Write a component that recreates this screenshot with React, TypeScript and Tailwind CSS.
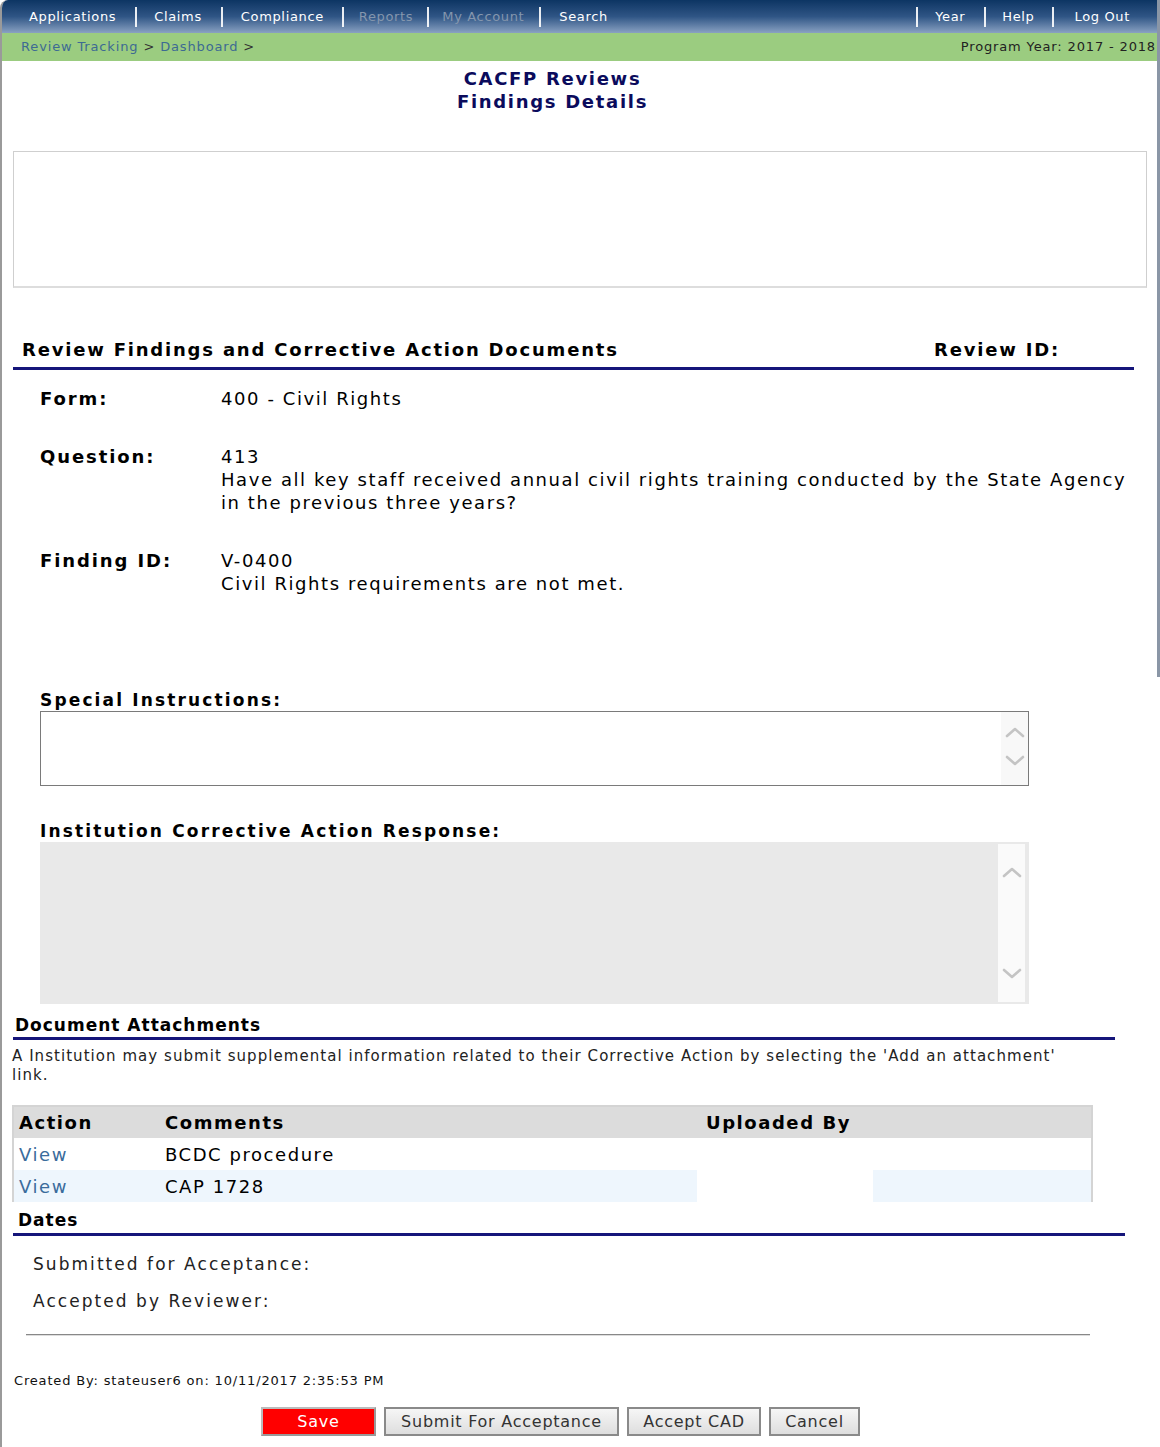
import React from "react";

const F = { fontFamily: '"DejaVu Sans", Verdana, sans-serif' };

function Sep() {
  return <div className="w-[2px] h-[20px] bg-white/90" />;
}

function Chevron({ up }: { up?: boolean }) {
  return (
    <svg width="20" height="12" viewBox="0 0 20 12" fill="none">
      <path
        d={up ? "M2 10 L10 3 L18 10" : "M2 2 L10 9 L18 2"}
        stroke="#c4c4c4"
        strokeWidth="2.6"
        strokeLinecap="round"
        strokeLinejoin="round"
      />
    </svg>
  );
}

function Btn({ children, red }: { children: React.ReactNode; red?: boolean }) {
  return (
    <button
      className={
        red
          ? "h-[29px] px-0 bg-[#ff0000] text-white text-[16px] tracking-[0.75px] border-2 border-[#999] border-t-[#bbb] border-l-[#bbb]"
          : "h-[29px] bg-gradient-to-b from-[#f6f6f6] to-[#dedede] text-[#333] text-[16px] tracking-[0.75px] border-2 border-[#8a8a8a]"
      }
      style={F}
    >
      {children}
    </button>
  );
}

export default function App() {
  return (
    <div className="w-[1160px] h-[1447px] bg-white overflow-hidden text-black" style={F}>
      {/* top part with right border */}
      <div className="h-[677px] border-l-2 border-r-[3px] border-l-[#9a9a9a] border-r-[#8a96a6] rounded-tl-[8px] overflow-hidden">
        {/* nav */}
        <div className="h-[33px] bg-gradient-to-b from-[#0c3563] via-[#2f5585] to-[#8aa2c2] flex items-center text-[13px] tracking-[0.65px] text-white">
          <div className="flex items-center">
            <span className="ml-[27px]">Applications</span>
            <div className="ml-[19px] mr-[17px]"><Sep /></div>
            <span>Claims</span>
            <div className="ml-[19px] mr-[18px]"><Sep /></div>
            <span>Compliance</span>
            <div className="ml-[18px] mr-[15px]"><Sep /></div>
            <span className="text-[#8496ad]">Reports</span>
            <div className="ml-[14px] mr-[13px]"><Sep /></div>
            <span className="text-[#8496ad]">My Account</span>
            <div className="ml-[15px] mr-[18px]"><Sep /></div>
            <span>Search</span>
          </div>
          <div className="ml-auto flex items-center mr-[27px]">
            <Sep />
            <span className="ml-[17px]">Year</span>
            <div className="ml-[19px] mr-[16px]"><Sep /></div>
            <span>Help</span>
            <div className="ml-[17px] mr-[21px]"><Sep /></div>
            <span>Log Out</span>
          </div>
        </div>
        {/* breadcrumb */}
        <div className="h-[28px] bg-[#9bcc80] flex items-center text-[13px] tracking-[0.85px] px-[19px] pr-[1px]">
          <span className="text-[#3d6a93]">Review Tracking</span>
          <span className="text-[#333] mx-[5px]">&gt;</span>
          <span className="text-[#3d6a93]">Dashboard</span>
          <span className="text-[#333] ml-[5px]">&gt;</span>
          <span className="ml-auto text-[#222]">Program Year: 2017 - 2018</span>
        </div>
        {/* title */}
        <div className="pt-[6px] pr-[54px] text-center font-bold text-[18px] leading-[23px] tracking-[1.7px] text-[#0b0b5c]">
          <div>CACFP Reviews</div>
          <div>Findings Details</div>
        </div>
        {/* empty box */}
        <div className="mt-[38px] ml-[11px] w-[1134px] h-[137px] border border-[#cfcfcf] border-b-2 border-b-[#dddddd]" />
        {/* section header */}
        <div className="mt-[50px] ml-[11px] w-[1121px] border-b-[3px] border-[#15157a] flex justify-between pl-[9px] pr-[74px] pb-[5px] font-bold text-[18px] leading-[24px] tracking-[1.8px]">
          <span>Review Findings and Corrective Action Documents</span>
          <span>Review ID:</span>
        </div>
        {/* fields */}
        <div className="ml-[38px] mt-[17px] grid grid-cols-[181px_1fr] text-[18px] leading-[23px] tracking-[1.58px] gap-y-[35px]">
          <div className="font-bold tracking-[1.9px]">Form:</div>
          <div>400 - Civil Rights</div>
          <div className="font-bold tracking-[1.9px]">Question:</div>
          <div>
            <div>413</div>
            <div className="whitespace-nowrap">Have all key staff received annual civil rights training conducted by the State Agency</div>
            <div>in the previous three years?</div>
          </div>
          <div className="font-bold tracking-[1.9px]">Finding ID:</div>
          <div>
            <div>V-0400</div>
            <div>Civil Rights requirements are not met.</div>
          </div>
        </div>
      </div>

      {/* bottom part */}
      <div className="h-[770px] border-l-2 border-[#9a9a9a]">
        <div className="pt-[12px] ml-[38px]">
          <div className="font-bold text-[17px] leading-[22px] tracking-[2.15px]">Special Instructions:</div>
          <div className="w-[989px] h-[75px] border border-[#7a7a7a] flex justify-end">
            <div className="w-[27px] h-full bg-[#f8f8f8] flex flex-col items-center pt-[14px] gap-[17px]">
              <Chevron up />
              <Chevron />
            </div>
          </div>
          <div className="mt-[34px] font-bold text-[17px] leading-[22px] tracking-[2.15px] whitespace-nowrap">Institution Corrective Action Response:</div>
          <div className="w-[989px] h-[162px] bg-[#e9e9e9] flex justify-end pr-[4px] py-[2px]">
            <div className="w-[27px] h-full bg-[#fafafa] flex flex-col items-center justify-between pt-[22px] pb-[22px]">
              <Chevron up />
              <Chevron />
            </div>
          </div>
        </div>

        {/* document attachments */}
        <div className="mt-[10px] ml-[11px] w-[1102px] border-b-[3px] border-[#15157a] pl-[2px] pb-[1px] font-bold text-[17px] leading-[22px] tracking-[1px]">
          Document Attachments
        </div>
        <div className="mt-[7px] ml-[10px] w-[1075px] text-[15px] leading-[19px] tracking-[1.05px] text-[#222]">
          A Institution may submit supplemental information related to their Corrective Action by selecting the 'Add an attachment' link.
        </div>

        {/* table */}
        <div className="mt-[20px] ml-[10px] w-[1081px] border-t-2 border-l-2 border-r-2 border-[#d4d4d4] text-[18px] tracking-[1.55px]">
          <div className="h-[31px] bg-[#dcdcdc] grid grid-cols-[145px_538px_176px_1fr] items-center font-bold">
            <div className="pl-[5px]">Action</div>
            <div className="pl-[6px]">Comments</div>
            <div className="pl-[9px] whitespace-nowrap">Uploaded By</div>
            <div />
          </div>
          <div className="h-[32px] bg-white grid grid-cols-[145px_538px_176px_1fr] items-center">
            <div className="pl-[5px] text-[#3a6c9c]">View</div>
            <div className="pl-[6px]">BCDC procedure</div>
            <div />
            <div />
          </div>
          <div className="h-[32px] grid grid-cols-[145px_538px_176px_1fr]">
            <div className="pl-[5px] text-[#3a6c9c] bg-[#eef6fd] flex items-center">View</div>
            <div className="pl-[6px] bg-[#eef6fd] flex items-center">CAP 1728</div>
            <div className="bg-white" />
            <div className="bg-[#eef6fd]" />
          </div>
        </div>

        {/* dates */}
        <div className="mt-[7px] ml-[11px] w-[1112px] border-b-[3px] border-[#15157a] pl-[5px] pb-[2px] font-bold text-[17px] leading-[22px] tracking-[1px]">
          Dates
        </div>
        <div className="ml-[31px] mt-[17px] text-[17px] leading-[22px] tracking-[2.05px] text-[#222]">
          <div>Submitted for Acceptance:</div>
          <div className="mt-[15px]">Accepted by Reviewer:</div>
        </div>
        <div className="mt-[22px] ml-[24px] w-[1064px] h-[2px] bg-[#888] border-b border-[#ddd]" />
        <div className="mt-[37px] ml-[12px] text-[13px] leading-[16px] tracking-[0.83px] text-[#111]">
          Created By: stateuser6 on: 10/11/2017 2:35:53 PM
        </div>
        <div className="mt-[18px] ml-[259px] flex gap-[8px]">
          <Btn red><span className="block w-[111px]">Save</span></Btn>
          <Btn><span className="block w-[231px]">Submit For Acceptance</span></Btn>
          <Btn><span className="block w-[130px]">Accept CAD</span></Btn>
          <Btn><span className="block w-[87px]">Cancel</span></Btn>
        </div>
      </div>
    </div>
  );
}
